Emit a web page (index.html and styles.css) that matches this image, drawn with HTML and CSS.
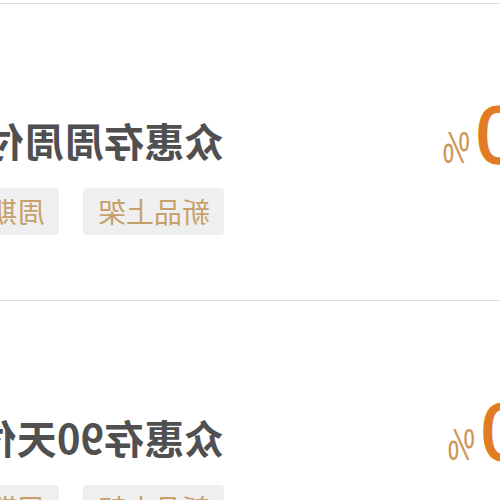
FILE: index.html
```
<!DOCTYPE html>
<html lang="zh-CN">
<head>
    <meta charset="UTF-8">
    <title>众惠存</title>
    <link rel="stylesheet" href="styles.css">
</head>
<body>
    <!-- the screenshot is a mirror image, so the list is flipped as a whole -->
    <div class="page">
        <div class="item">
            <div class="rate">
                <span class="num">4.0</span><span class="pct">%</span>
            </div>
            <div class="info">
                <div class="title">众惠存周周付息</div>
                <div class="tags">
                    <span class="tag">新品上架</span>
                    <span class="tag">周期付息</span>
                </div>
            </div>
        </div>
        <div class="item">
            <div class="rate rate-alt">
                <span class="num">4.0</span><span class="pct">%</span>
            </div>
            <div class="info">
                <div class="title">众惠存90天付息</div>
                <div class="tags">
                    <span class="tag">新品上架</span>
                    <span class="tag">周期付息</span>
                </div>
            </div>
        </div>
    </div>
</body>
</html>
```

FILE: styles.css
```
html, body {
    margin: 0;
    padding: 0;
    background: #fff;
    overflow: hidden;
}
.page {
    width: 500px;
    height: 500px;
    overflow: hidden;
    padding-top: 3px;
    box-sizing: border-box;
    transform: scaleX(-1);
    font-family: "Noto Sans CJK SC", "Noto Sans", sans-serif;
}
.item {
    display: flex;
    height: 297px;
    box-sizing: border-box;
    border-top: 1px solid #dcdcdc;
    padding-top: 112px;
    white-space: nowrap;
}
.rate {
    width: 276px;
    flex-shrink: 0;
    margin-top: -22px;
    display: flex;
    align-items: baseline;
    font-family: "Liberation Sans", Arial, sans-serif;
}
.rate .num {
    margin-left: -90px;
    font-size: 82px;
    line-height: 82px;
    color: #e17c24;
    -webkit-text-stroke: 1.5px #e17c24;
}
.rate .pct {
    margin-left: 6px;
    font-size: 44px;
    color: #cf9659;
    display: inline-block;
    transform: scaleX(0.7);
    transform-origin: left bottom;
}
.rate-alt .num {
    margin-left: -95px;
}
.info {
    flex-shrink: 0;
}
.title {
    font-size: 40px;
    line-height: 48px;
    font-weight: bold;
    color: #505050;
}
.tags {
    margin-top: 24px;
    display: flex;
    gap: 24px;
}
.tag {
    display: inline-block;
    height: 47px;
    line-height: 47px;
    padding: 0 15px 0 14px;
    font-size: 28px;
    color: #c6a06a;
    background: #efefef;
    border-radius: 4px;
}
```
